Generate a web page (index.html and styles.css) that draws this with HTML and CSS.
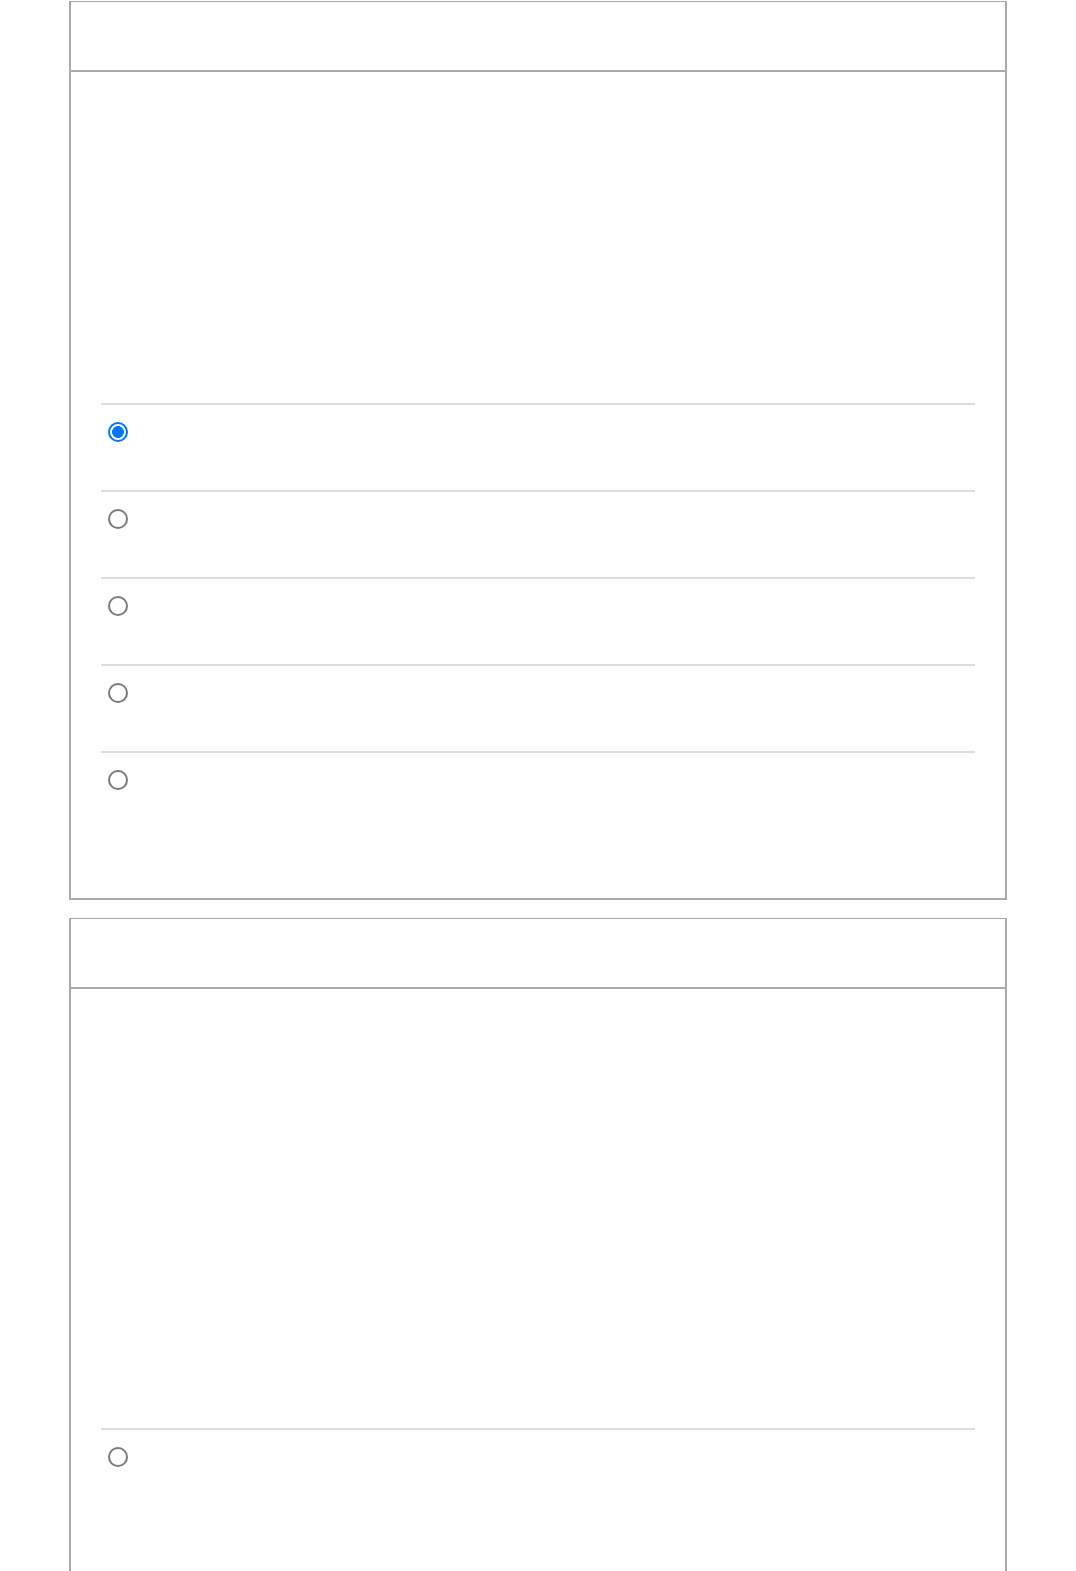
FILE: index.html
```html
<!doctype html>
<html>
<head>
<meta charset="utf-8">
<title>Quiz</title>
<link rel="stylesheet" href="styles.css">
</head>
<body>
	<div class="page">
		<div class="card">
			<div class="card-head"></div>
			<div class="card-body q1">
				<ul class="options">
					<li><input type="radio" name="q1" checked></li>
					<li><input type="radio" name="q1"></li>
					<li><input type="radio" name="q1"></li>
					<li><input type="radio" name="q1"></li>
					<li><input type="radio" name="q1"></li>
				</ul>
			</div>
		</div>

		<div class="card">
			<div class="card-head"></div>
			<div class="card-body q2">
				<ul class="options">
					<li><input type="radio" name="q2"></li>
				</ul>
			</div>
		</div>
	</div>
</body>
</html>
```

FILE: styles.css
```css
body,*{
	padding:0px;
	margin:0px;
	font-family:"Liberation Sans", Arial, sans-serif;
}

body{
	background:#fff;
}

.page{
	padding-top:1px;
}

.card{
	width:934px;
	margin:0 auto 18px auto;
	border:1px solid #aaa;
	border-width:1px 2px 2px 2px;
}

.card-head{
	height:68px;
	border-bottom:2px solid #aaa;
}

.card-body{
	padding:0 30px 60px 30px;
}

.q1{
	padding-top:331px;
}

.q2{
	padding-top:439px;
	padding-bottom:200px;
}

.options{
	list-style-type:none;
}

.options li{
	height:85px;
	border-top:2px solid #ddd;
	padding-left:7px;
}

.options input{
	-webkit-appearance:none;
	appearance:none;
	display:block;
	box-sizing:border-box;
	width:20px;
	height:20px;
	margin-top:17px;
	border:2px solid #7a7a7a;
	border-radius:50%;
	background:#fff;
}

.options input:checked{
	border:2px solid #0075ff;
	background:radial-gradient(circle, #0075ff 0, #0075ff 5.6px, #fff 6.2px);
}
```
